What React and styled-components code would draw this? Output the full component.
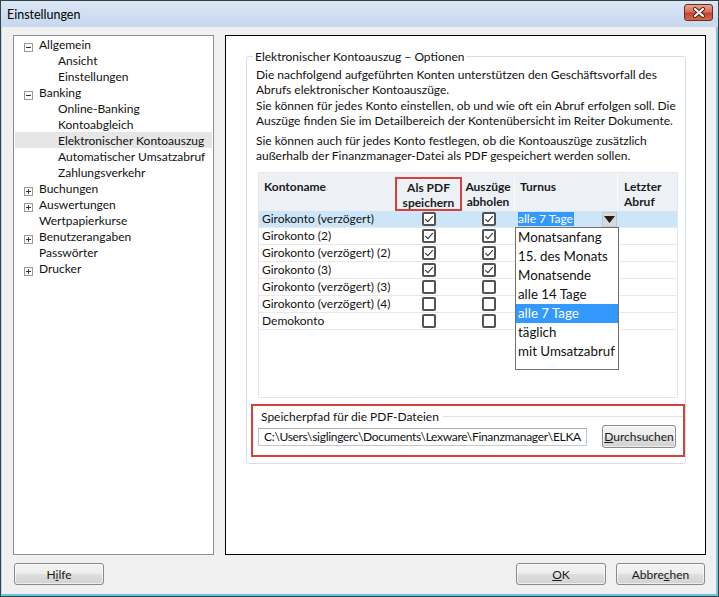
import React from 'react';
import styled, { createGlobalStyle } from 'styled-components';

const Global = createGlobalStyle`
  html, body { margin: 0; padding: 0; background: #ffffff; }
  body {
    font-family: Lato, "Noto Sans", "DejaVu Sans", sans-serif;
    font-size: 12px;
    color: #111;
  }
  * { box-sizing: border-box; }
`;

const Window = styled.div`
  width: 719px;
  height: 597px;
  display: flex;
  flex-direction: column;
  border: 1px solid #35404b;
  background: #f0f0f0;
`;

const TitleBar = styled.div`
  height: 26px;
  flex: none;
  display: flex;
  align-items: center;
  justify-content: space-between;
  padding: 0 5px 0 6px;
  background: linear-gradient(#dae6f4, #c6d8ee);
  font-size: 12.5px;
  color: #000;
`;

const CloseButton = styled.div`
  width: 29px;
  height: 17px;
  margin-top: -4px;
  border: 1px solid #6a2b22;
  border-radius: 3px;
  background: linear-gradient(#e9a193 0%, #d8705c 45%, #c5432d 55%, #d06a4c 100%);
  display: flex;
  align-items: center;
  justify-content: center;
`;

const Body = styled.div`
  flex: 1;
  display: flex;
  flex-direction: column;
  padding: 8px 10px 0 11px;
  border-left: 1px solid #c2d4ea;
  border-right: 2px solid #77c6e6;
  border-bottom: 2px solid #6cc2e4;
`;

const Main = styled.div`
  display: flex;
  height: 520px;
  gap: 11px;
`;

const Tree = styled.div`
  width: 201px;
  flex: none;
  border: 1px solid #8a9099;
  background: #fff;
  padding: 0 1px 1px;
`;

const TreeRow = styled.div`
  height: 16px;
  display: flex;
  align-items: center;
  padding-left: 9px;
  background: ${p => (p.$selected ? '#e6e6e6' : 'transparent')};
`;

const ExpanderSlot = styled.div`
  width: 9px;
  height: 9px;
  flex: none;
  margin-right: 6px;
`;

const TreeLabel = styled.span`
  margin-left: ${p => p.$level * 19}px;
  white-space: nowrap;
`;

const Panel = styled.div`
  flex: 1;
  border: 1px solid #000;
  background: #fff;
  padding: 13px 19px 0 20px;
`;

const Group = styled.fieldset`
  margin: 0;
  padding: 0 7px 6px 9px;
  border: 1px solid #d5dde5;
  border-radius: 3px;
  min-width: 0;
`;

const Legend = styled.legend`
  padding: 0 2px;
  margin-left: -3px;
  line-height: 15px;
  color: #111;
`;

const Para = styled.p`
  margin: ${p => p.$gap}px 0 0 0;
  line-height: 15px;
  white-space: nowrap;
`;

const Table = styled.div`
  margin: 9px 0 0 2px;
  width: 420px;
  height: 226px;
  border: 1px solid #e4e6e9;
  display: flex;
  flex-direction: column;
`;

const cols = '136px 67px 53px 103px 59px';

const HeaderRow = styled.div`
  display: grid;
  grid-template-columns: ${cols};
  height: 38px;
  background: #edf0f4;
  font-weight: 700;
  color: #1b1b1b;
`;

const HeaderCell = styled.div`
  padding: ${p => p.$pad};
  text-align: ${p => p.$align || 'left'};
  line-height: 15px;
  border-right: ${p => (p.$divider ? '1px solid #fafbfc' : 'none')};
`;

const Highlight = styled.div`
  margin-top: 4px;
  height: 34px;
  border: 2px solid #d5413b;
  text-align: center;
  line-height: 15px;
  padding-top: 1px;
`;

const Row = styled.div`
  display: grid;
  grid-template-columns: ${cols};
  height: 17px;
  border-bottom: 1px solid #e9e9e9;
  background: ${p => (p.$selected ? '#cde5f8' : 'transparent')};
  align-items: center;
`;

const NameCell = styled.div`
  padding-left: 3px;
  white-space: nowrap;
  line-height: 16px;
`;

const CenterCell = styled.div`
  display: flex;
  justify-content: center;
  align-items: center;
  height: 16px;
`;

const CheckBox = styled.div`
  width: 14px;
  height: 14px;
  border: 2px solid #535353;
  border-radius: 2px;
  background: #fff;
  display: flex;
  align-items: center;
  justify-content: center;
`;

const TurnusCell = styled.div`
  position: relative;
  height: 16px;
  display: flex;
  align-items: center;
  justify-content: space-between;
  padding: 0 1px 0 3px;
`;

const SelectedValue = styled.span`
  background: #3399ff;
  color: #fff;
  line-height: 14px;
  padding: 0 1px 0 0;
`;

const ArrowButton = styled.div`
  width: 15px;
  height: 15px;
  background: #d9dadc;
  border: 1px solid #c4c6c9;
  display: flex;
  align-items: center;
  justify-content: center;
`;

const DropList = styled.div`
  position: absolute;
  top: 16px;
  left: 0;
  width: 104px;
  height: 143px;
  background: #fff;
  border: 1px solid #707070;
  z-index: 5;
`;

const DropItem = styled.div`
  height: 19px;
  line-height: 19px;
  padding-left: 2px;
  font-size: 13.3px;
  white-space: nowrap;
  background: ${p => (p.$active ? '#3399ff' : 'transparent')};
  color: ${p => (p.$active ? '#fff' : '#111')};
`;

const PathSection = styled.div`
  margin: 6px -7px 0 -5px;
  height: 53px;
  border: 2px solid #d5413b;
`;

const SectionTitle = styled.div`
  display: flex;
  align-items: center;
  margin-top: 3px;
  padding-left: 8px;
  line-height: 15px;
  &::after {
    content: '';
    flex: 1;
    margin-left: 4px;
    border-top: 1px solid #dde3ea;
  }
`;

const PathRow = styled.div`
  display: flex;
  align-items: center;
  justify-content: space-between;
  margin-top: 1px;
  padding: 0 7px 0 5px;
`;

const PathInput = styled.div`
  width: 329px;
  height: 18px;
  border: 1px solid #c5c9cf;
  border-top-color: #abadb3;
  background: #fff;
  padding-left: 5px;
  line-height: 16px;
  letter-spacing: -0.3px;
  white-space: nowrap;
  overflow: hidden;
`;

const Button = styled.div`
  width: ${p => p.$w}px;
  height: ${p => p.$h || 22}px;
  border: 1px solid #8a8a8a;
  border-radius: 3px;
  background: linear-gradient(#f4f4f4 0%, #ececec 48%, #dedede 52%, #d2d2d2 100%);
  display: flex;
  align-items: center;
  justify-content: center;
  color: #1a1a1a;
  box-shadow: inset 0 0 0 1px rgba(255, 255, 255, 0.6);
`;

const Key = styled.span`
  text-decoration: underline;
`;

const Footer = styled.div`
  display: flex;
  justify-content: space-between;
  margin-top: 8px;
  padding-left: 1px;
  padding-right: 1px;
`;

const ButtonGroup = styled.div`
  display: flex;
  gap: 10px;
`;

const Expander = ({ open }) => (
  <svg width="9" height="9" viewBox="0 0 9 9">
    <rect x="0.5" y="0.5" width="8" height="8" fill="#fff" stroke="#9a9a9a" />
    <path d="M2 4.5h5" stroke="#333" />
    {!open && <path d="M4.5 2v5" stroke="#333" />}
  </svg>
);

const Check = ({ on }) => (
  <CheckBox>
    {on && (
      <svg width="10" height="10" viewBox="0 0 10 10">
        <path d="M1.3 5.1 L3.9 7.6 L8.8 2.2" fill="none" stroke="#3a3a3a" strokeWidth="1.2" />
      </svg>
    )}
  </CheckBox>
);

const treeItems = [
  { label: 'Allgemein', level: 0, exp: 'open' },
  { label: 'Ansicht', level: 1 },
  { label: 'Einstellungen', level: 1 },
  { label: 'Banking', level: 0, exp: 'open' },
  { label: 'Online-Banking', level: 1 },
  { label: 'Kontoabgleich', level: 1 },
  { label: 'Elektronischer Kontoauszug', level: 1, selected: true },
  { label: 'Automatischer Umsatzabruf', level: 1 },
  { label: 'Zahlungsverkehr', level: 1 },
  { label: 'Buchungen', level: 0, exp: 'closed' },
  { label: 'Auswertungen', level: 0, exp: 'closed' },
  { label: 'Wertpapierkurse', level: 0 },
  { label: 'Benutzerangaben', level: 0, exp: 'closed' },
  { label: 'Passwörter', level: 0 },
  { label: 'Drucker', level: 0, exp: 'closed' },
];

const accounts = [
  { name: 'Girokonto (verzögert)', pdf: true, fetch: true },
  { name: 'Girokonto (2)', pdf: true, fetch: true },
  { name: 'Girokonto (verzögert) (2)', pdf: true, fetch: true },
  { name: 'Girokonto (3)', pdf: true, fetch: true },
  { name: 'Girokonto (verzögert) (3)', pdf: false, fetch: false },
  { name: 'Girokonto (verzögert) (4)', pdf: false, fetch: false },
  { name: 'Demokonto', pdf: false, fetch: false },
];

const intervals = [
  'Monatsanfang',
  '15. des Monats',
  'Monatsende',
  'alle 14 Tage',
  'alle 7 Tage',
  'täglich',
  'mit Umsatzabruf',
];

export default function App() {
  return (
    <>
      <Global />
      <Window>
        <TitleBar>
          <span>Einstellungen</span>
          <CloseButton>
            <svg width="14" height="11" viewBox="0 0 14 11">
              <path d="M3 2 L11 9 M11 2 L3 9" stroke="#5a1d14" strokeWidth="4" strokeLinecap="round" />
              <path d="M3 2 L11 9 M11 2 L3 9" stroke="#fff" strokeWidth="2.2" strokeLinecap="round" />
            </svg>
          </CloseButton>
        </TitleBar>
        <Body>
          <Main>
            <Tree>
              {treeItems.map(item => (
                <TreeRow key={item.label} $selected={item.selected}>
                  <ExpanderSlot>{item.exp && <Expander open={item.exp === 'open'} />}</ExpanderSlot>
                  <TreeLabel $level={item.level}>{item.label}</TreeLabel>
                </TreeRow>
              ))}
            </Tree>
            <Panel>
              <Group>
                <Legend>Elektronischer Kontoauszug – Optionen</Legend>
                <Para $gap={3}>
                  Die nachfolgend aufgeführten Konten unterstützen den Geschäftsvorfall des
                  <br />
                  Abrufs elektronischer Kontoauszüge.
                </Para>
                <Para $gap={1}>
                  Sie können für jedes Konto einstellen, ob und wie oft ein Abruf erfolgen soll. Die
                  <br />
                  Auszüge finden Sie im Detailbereich der Kontenübersicht im Reiter Dokumente.
                </Para>
                <Para $gap={5}>
                  Sie können auch für jedes Konto festlegen, ob die Kontoauszüge zusätzlich
                  <br />
                  außerhalb der Finanzmanager-Datei als PDF gespeichert werden sollen.
                </Para>
                <Table>
                  <HeaderRow>
                    <HeaderCell $pad="6px 0 0 5px">Kontoname</HeaderCell>
                    <HeaderCell $pad="0">
                      <Highlight>
                        Als PDF
                        <br />
                        speichern
                      </Highlight>
                    </HeaderCell>
                    <HeaderCell $pad="6px 0 0 0" $align="center" $divider>
                      Auszüge
                      <br />
                      abholen
                    </HeaderCell>
                    <HeaderCell $pad="6px 0 0 5px" $divider>Turnus</HeaderCell>
                    <HeaderCell $pad="6px 0 0 6px">
                      Letzter
                      <br />
                      Abruf
                    </HeaderCell>
                  </HeaderRow>
                  {accounts.map((acc, i) => (
                    <Row key={acc.name} $selected={i === 0}>
                      <NameCell>{acc.name}</NameCell>
                      <CenterCell>
                        <Check on={acc.pdf} />
                      </CenterCell>
                      <CenterCell>
                        <Check on={acc.fetch} />
                      </CenterCell>
                      {i === 0 ? (
                        <TurnusCell>
                          <SelectedValue>alle 7 Tage</SelectedValue>
                          <ArrowButton>
                            <svg width="11" height="7" viewBox="0 0 11 7">
                              <path d="M0 0 H11 L5.5 7 Z" fill="#1e1e1e" />
                            </svg>
                          </ArrowButton>
                          <DropList>
                            {intervals.map(label => (
                              <DropItem key={label} $active={label === 'alle 7 Tage'}>
                                {label}
                              </DropItem>
                            ))}
                          </DropList>
                        </TurnusCell>
                      ) : (
                        <div />
                      )}
                      <div />
                    </Row>
                  ))}
                </Table>
                <PathSection>
                  <SectionTitle>Speicherpfad für die PDF-Dateien</SectionTitle>
                  <PathRow>
                    <PathInput>C:\Users\siglingerc\Documents\Lexware\Finanzmanager\ELKA</PathInput>
                    <Button $w={74} $h={23}>
                      <span>
                        <Key>D</Key>urchsuchen
                      </span>
                    </Button>
                  </PathRow>
                </PathSection>
              </Group>
            </Panel>
          </Main>
          <Footer>
            <Button $w={90}>
              <span>
                H<Key>i</Key>lfe
              </span>
            </Button>
            <ButtonGroup>
              <Button $w={90}>
                <span>
                  <Key>O</Key>K
                </span>
              </Button>
              <Button $w={89}>
                <span>
                  Abbre<Key>c</Key>hen
                </span>
              </Button>
            </ButtonGroup>
          </Footer>
        </Body>
      </Window>
    </>
  );
}
